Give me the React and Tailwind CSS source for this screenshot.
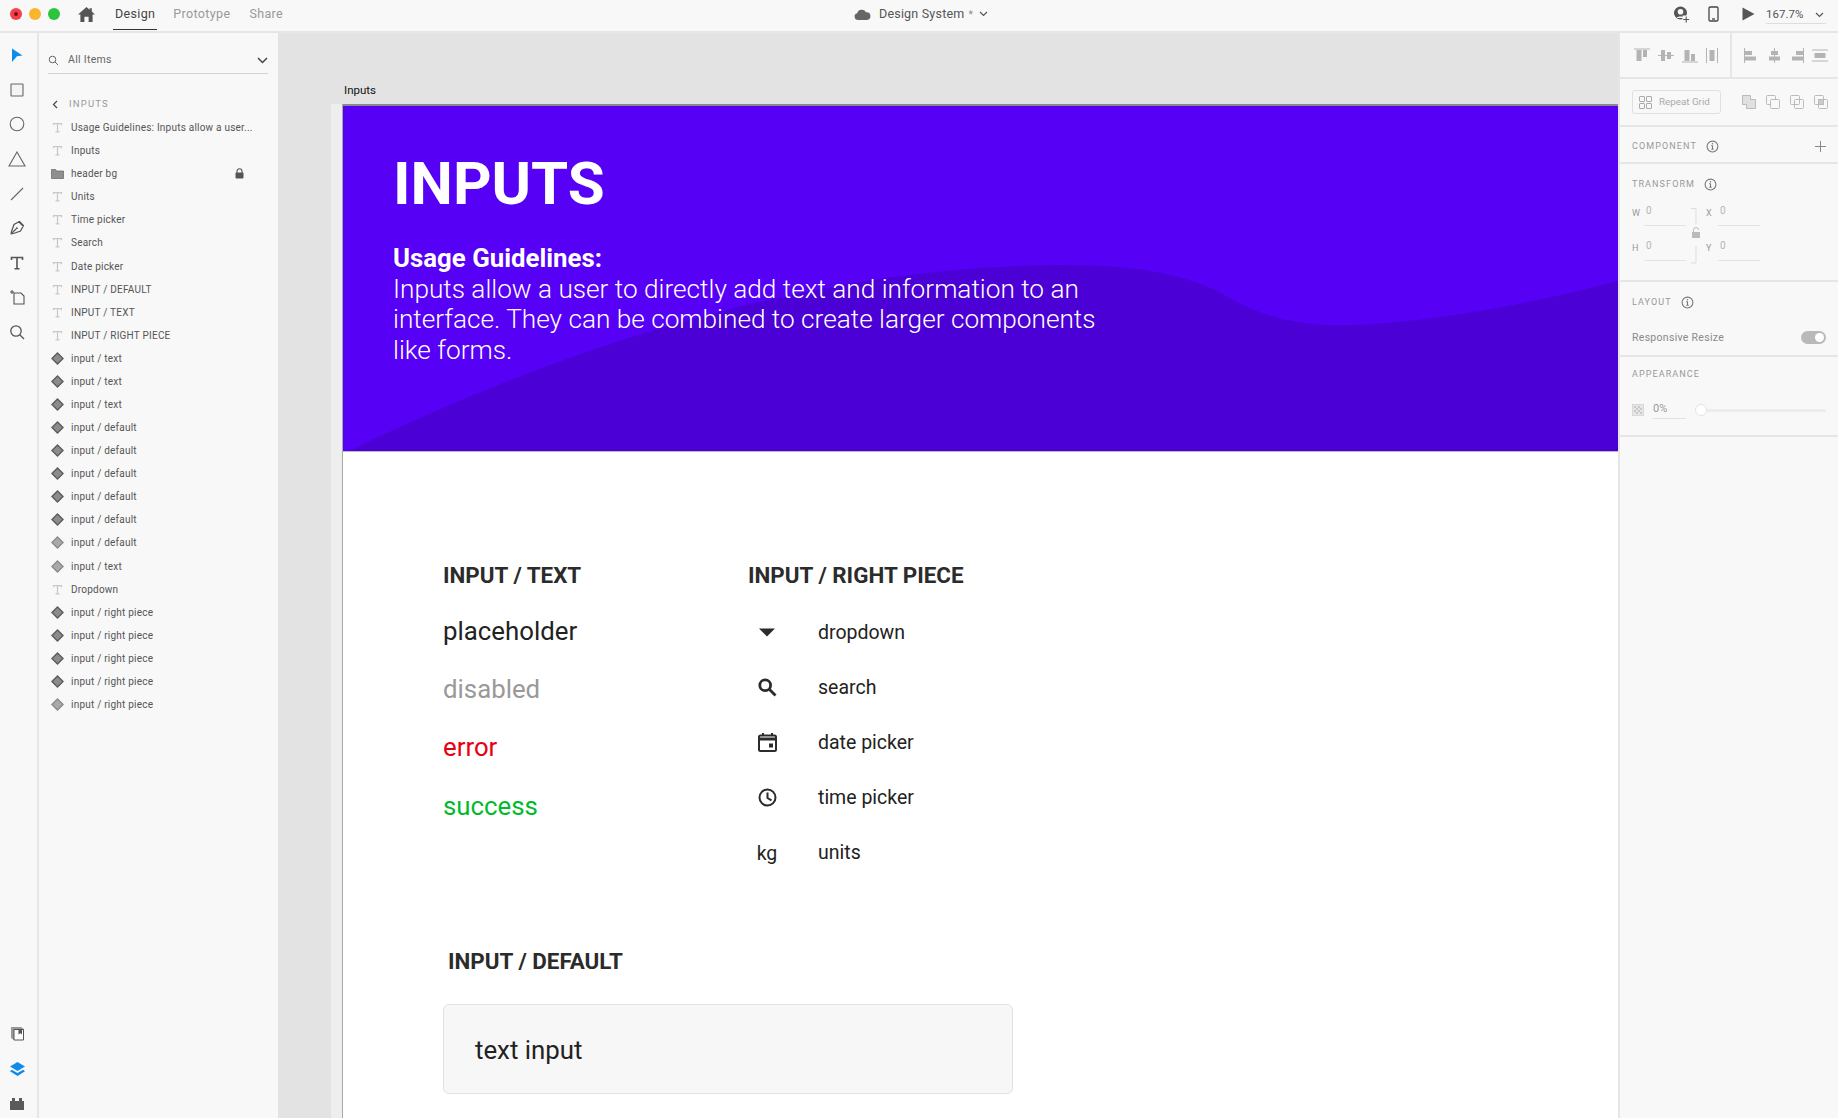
import React from "react";

const TIcon = ({ s = 13, c = "#c4c4c4", w = 1.6 }) => (
  <svg width={s} height={s} viewBox="0 0 14 14" fill="none" stroke={c} strokeWidth={w}>
    <path d="M2 4V2h10v2M7 2v10M4.5 12.5h5" />
  </svg>
);
const Diamond = ({ light }) => (
  <svg width="13" height="13" viewBox="0 0 13 13">
    <path d="M6.5 1 12 6.5 6.5 12 1 6.5Z" fill={light ? "#a9a9a9" : "#8c8c8c"} stroke={light ? "#8a8a8a" : "#5c5c5c"} strokeWidth="1.4" />
  </svg>
);
const Folder = () => (
  <svg width="13" height="13" viewBox="0 0 13 13">
    <path d="M0.5 2.5h4l1.2 1.5h6.8v7.5h-12Z" fill="#8f8f8f" stroke="#6f6f6f" strokeWidth=".8" />
  </svg>
);
const Info = () => (
  <svg width="13" height="13" viewBox="0 0 12 12" fill="none" stroke="#777" strokeWidth="1">
    <circle cx="6" cy="6" r="5" />
    <path d="M6 5.2v3.2M4.9 8.5h2.2M4.9 5.2H6" />
    <circle cx="6" cy="3.4" r=".7" fill="#777" stroke="none" />
  </svg>
);

const layers = [
  ["t", "Usage Guidelines: Inputs allow a user..."], ["t", "Inputs"], ["f", "header bg"], ["t", "Units"], ["t", "Time picker"],
  ["t", "Search"], ["t", "Date picker"], ["t", "INPUT / DEFAULT"], ["t", "INPUT / TEXT"], ["t", "INPUT / RIGHT PIECE"],
  ["d", "input / text"], ["d", "input / text"], ["d", "input / text"],
  ["d", "input / default"], ["d", "input / default"], ["d", "input / default"], ["d", "input / default"], ["d", "input / default"],
  ["l", "input / default"], ["l", "input / text"], ["t", "Dropdown"],
  ["d", "input / right piece"], ["d", "input / right piece"], ["d", "input / right piece"], ["d", "input / right piece"], ["l", "input / right piece"],
];

const railTop = [
  <svg key="a" width="14" height="16" viewBox="0 0 14 16"><path d="M2 1.5 12.5 8.6 7 9.2 2 15Z" fill="#0f8ce9" /></svg>,
  <svg key="b" width="14" height="14" viewBox="0 0 14 14" fill="#f4f4f4" stroke="#666" strokeWidth="1.1"><rect x="1" y="1" width="12" height="12" rx=".5" /></svg>,
  <svg key="c" width="16" height="16" viewBox="0 0 16 16" fill="none" stroke="#666" strokeWidth="1.1"><circle cx="8" cy="8" r="6.8" /></svg>,
  <svg key="d" width="18" height="16" viewBox="0 0 18 16" fill="none" stroke="#666" strokeWidth="1.1"><path d="M9 1 17 15H1Z" /></svg>,
  <svg key="e" width="14" height="14" viewBox="0 0 14 14" fill="none" stroke="#666" strokeWidth="1.1"><path d="M1 13 13 1" /></svg>,
  <svg key="f" width="16" height="16" viewBox="0 0 16 16" fill="none" stroke="#555" strokeWidth="1.2"><path d="M10.5 1.5 14.5 5.5 11.5 11 4.5 13.5 2.2 13.8 2.5 11.5 5 4.5ZM2.4 13.6 7 9M9.5 1.5l5 5" /><circle cx="7.8" cy="8.2" r="1" fill="#555" stroke="none" /></svg>,
  <svg key="g" width="14" height="14" viewBox="0 0 14 14" fill="none" stroke="#555" strokeWidth="1.6"><path d="M1.5 4V1.5h11V4M7 1.5v11M4.5 12.8h5" /></svg>,
  <svg key="h" width="17" height="16" viewBox="0 0 17 16" fill="none" stroke="#555" strokeWidth="1.1"><path d="M5 4h7l3 3v8H5ZM1 3h4M3 1v4" /></svg>,
  <svg key="i" width="16" height="16" viewBox="0 0 16 16" fill="none" stroke="#555" strokeWidth="1.3"><circle cx="7" cy="7" r="5.2" /><path d="m11 11 4 4" /></svg>,
];

const Align = ({ d }) => (
  <svg width="17" height="17" viewBox="0 0 17 17" fill="#b4b4b4">{d}</svg>
);

const Tabs = () => (
  <div className="flex items-center h-full ml-[18px] text-[12.5px] tracking-[0.35px]">
    <div className="relative h-full flex items-center px-[2px] text-[#444]">
      Design
      <div className="absolute left-0 right-0 -bottom-[2px] h-[1.5px] bg-[#333]" />
    </div>
    <div className="ml-[16px] text-[#999]">Prototype</div>
    <div className="ml-[19px] text-[#999]">Share</div>
  </div>
);

const TopBar = () => (
  <div className="relative h-[33px] shrink-0 flex items-center justify-between bg-[#f8f8f8] border-b-2 border-[#e6e6e6] pl-[10px] pr-[12px] pb-[3px]">
    <div className="flex items-center h-full">
      <div className="flex items-center gap-[7px]">
        <div className="w-[12px] h-[12px] rounded-full bg-[#f2404a] flex items-center justify-center">
          <div className="w-[4px] h-[4px] rounded-full bg-[#7a1010]" />
        </div>
        <div className="w-[12px] h-[12px] rounded-full bg-[#f9b52c]" />
        <div className="w-[12px] h-[12px] rounded-full bg-[#2bc43c]" />
      </div>
      <svg className="ml-[18px]" width="17" height="15" viewBox="0 0 17 15" fill="#555"><path d="M8.5 0 0 7.5h2.4V15h4V9.8h4.2V15h4V7.5H17L13.8 4.6V1.2h-2.2v1.5Z" /></svg>
      <Tabs />
    </div>
    <div className="absolute left-[854px] top-0 h-[28px] flex items-center">
      <svg width="17" height="11" viewBox="0 0 17 11" fill="#666"><path d="M4 11a3.4 3.4 0 0 1-.8-6.7A4.8 4.8 0 0 1 12 3.2 3.9 3.9 0 0 1 13 11Z" /></svg>
      <span className="ml-[8px] text-[12.5px] text-[#555] tracking-[0.2px]">Design System</span>
      <span className="ml-[4px] text-[10px] text-[#888]">*</span>
      <svg className="ml-[6px]" width="9" height="6" viewBox="0 0 9 6" fill="none" stroke="#555" strokeWidth="1.2"><path d="m1 1 3.5 3.5L8 1" /></svg>
    </div>
    <div className="flex items-center h-full">
      <svg width="17" height="17" viewBox="0 0 17 17">
        <circle cx="7.5" cy="7" r="6.5" fill="#555" />
        <circle cx="7.5" cy="5.8" r="2.8" fill="#f8f8f8" />
        <path d="M3.5 12c1-2 7-2 8 0" fill="#f8f8f8" />
        <rect x="9.5" y="9.5" width="7.5" height="7.5" fill="#f8f8f8" />
        <path d="M13.2 10.5v6M10.2 13.5h6" stroke="#555" strokeWidth="1.1" />
      </svg>
      <svg className="ml-[18px]" width="11" height="16" viewBox="0 0 11 16" fill="none" stroke="#444" strokeWidth="1.3"><rect x="1" y="1" width="9" height="14" rx="1.3" /><path d="M4 13h3" /></svg>
      <svg className="ml-[23px]" width="13" height="14" viewBox="0 0 13 14" fill="#555"><path d="M0.5 0.5 12.5 7 0.5 13.5Z" /></svg>
      <div className="ml-[11px] w-[60px] h-[18px] border-b border-[#dddddd] flex items-center justify-between mt-[2px]">
        <span className="text-[11.5px] text-[#555] leading-none">167.7%</span>
        <svg className="mr-[2px]" width="9" height="6" viewBox="0 0 9 6" fill="none" stroke="#555" strokeWidth="1.2"><path d="m1 1 3.5 3.5L8 1" /></svg>
      </div>
    </div>
  </div>
);

const Rail = () => (
  <div className="w-[39px] shrink-0 bg-[#f8f8f8] border-r-2 border-[#e6e6e6] flex flex-col pt-[5px] pr-[3px] -mb-[3px]">
    {railTop.map((icon, i) => (
      <div key={i} className="h-[34.6px] flex items-center justify-center">{icon}</div>
    ))}
    <div className="mt-auto">
      <div className="h-[35px] flex items-center justify-center">
        <svg width="15" height="15" viewBox="0 0 15 15"><path d="M1 1h10l3 2v11H4L1 12Z" fill="#999" /><path d="M4 3.5h9.5V14H4Z" fill="#fff" stroke="#555" strokeWidth="1" /><path d="M8.5 3.5h3.5v5l-1.7-1.2L8.5 8.5Z" fill="#555" /></svg>
      </div>
      <div className="h-[35px] flex items-center justify-center">
        <svg width="15" height="14" viewBox="0 0 15 14" fill="#0f8ce9"><path d="M7.5 0 15 4.5 7.5 9 0 4.5Z" /><path d="M1.8 7.8 7.5 11 13.2 7.8 15 9.3 7.5 14 0 9.3Z" /></svg>
      </div>
      <div className="h-[35px] flex items-center justify-center">
        <svg width="14" height="12" viewBox="0 0 14 12" fill="#5a5a5a"><path d="M0 3h2V0h3v3h4V0h3v3h2v9H0Z" /></svg>
      </div>
    </div>
  </div>
);

const LayersPanel = () => (
  <div className="w-[239px] shrink-0 bg-[#f8f8f8] pl-[9px] pr-[10px]">
    <div className="h-[41px] border-b border-[#d2d2d2] flex items-end pb-[5px]">
      <div className="flex items-center justify-between w-full">
        <div className="flex items-center">
          <svg width="11" height="11" viewBox="0 0 11 11" fill="none" stroke="#666" strokeWidth="1"><circle cx="4.5" cy="4.5" r="3.3" /><path d="m7 7 3 3" /></svg>
          <span className="ml-[9px] text-[10.5px] text-[#666] tracking-[0.3px]">All Items</span>
        </div>
        <svg width="11" height="7" viewBox="0 0 11 7" fill="none" stroke="#444" strokeWidth="1.5"><path d="m1 1 4.5 4.5L10 1" /></svg>
      </div>
    </div>
    <div className="flex items-center h-[14px] mt-[23px] pl-[4px]">
      <svg width="6" height="9" viewBox="0 0 6 9" fill="none" stroke="#444" strokeWidth="1.2"><path d="M5 1 1.5 4.5 5 8" /></svg>
      <span className="ml-[11px] text-[9.5px] tracking-[1.2px] text-[#999]">INPUTS</span>
    </div>
    <div className="mt-[5px]">
      {layers.map(([k, name], i) => (
        <div key={i} className="h-[23.08px] flex items-center relative">
          <div className="w-[23px] flex items-center justify-center pr-[4px]">
            {k === "t" && <TIcon s={11} c="#c8c8c8" />}
            {k === "f" && <Folder />}
            {k === "d" && <Diamond />}
            {k === "l" && <Diamond light />}
          </div>
          <span className="text-[10px] text-[#555] tracking-[0.22px] whitespace-nowrap">{name}</span>
          {k === "f" && (
            <svg className="absolute left-[187px] top-[6px]" width="9" height="11" viewBox="0 0 9 11" fill="#555"><path d="M2 5V3.2a2.5 2.5 0 0 1 5 0V5" fill="none" stroke="#555" strokeWidth="1.1" /><rect x="0.5" y="4.5" width="8" height="6" rx="1" /></svg>
          )}
        </div>
      ))}
    </div>
  </div>
);

const rightRows = [
  {
    k: "dropdown",
    icon: <svg width="18" height="9" viewBox="0 0 18 9" fill="#2b2b2b"><path d="M1 .5h16L9 8.5Z" /></svg>,
  },
  {
    k: "search",
    icon: <svg width="19" height="19" viewBox="0 0 19 19" fill="none" stroke="#2b2b2b" strokeWidth="2.8"><circle cx="7.2" cy="7.2" r="5.4" /><path d="m11.5 11.5 6 6" /></svg>,
  },
  {
    k: "date picker",
    icon: <svg width="19" height="19" viewBox="0 0 19 19" fill="none" stroke="#2b2b2b"><rect x="1" y="2.5" width="17" height="15.5" rx="1.5" strokeWidth="2" /><path d="M1 6h17" strokeWidth="3" /><path d="M5 0v3M14 0v3" strokeWidth="2" /><rect x="11" y="10.5" width="4" height="4" fill="#2b2b2b" stroke="none" /></svg>,
  },
  {
    k: "time picker",
    icon: <svg width="19" height="19" viewBox="0 0 19 19" fill="none" stroke="#2b2b2b" strokeWidth="2"><circle cx="9.5" cy="9.5" r="8" /><path d="M9.5 4.5v5.5l4 2.4" /></svg>,
  },
  { k: "units", icon: <span className="text-[19.5px] text-[#222] leading-none relative top-[1px]">kg</span> },
];

const Artboard = () => (
  <div className="flex-1 min-w-0 bg-[#e3e3e3] flex flex-col overflow-hidden pl-[53px]">
    <div className="h-[14px] mt-[51px] flex items-center pl-[13px] text-[11.5px] text-[#111]">Inputs</div>
    <div className="mt-[6px] flex-1 border-l-[11px] border-[#eeeeee] min-h-0">
      <div className="h-full bg-white border-l border-[#a8a8a8] overflow-hidden">
        <div className="relative h-[348px] bg-[#5600f5] border-t-2 border-[#8a8a8a] border-b border-b-[#bbbbbb] overflow-hidden">
          <svg className="absolute inset-0" width="1275" height="348" viewBox="0 0 1275 348" preserveAspectRatio="none">
            <path d="M0 348C150 275 420 160 720 159C800 159 850 170 885 191C930 218 980 221 1012 219C1100 215 1200 195 1275 175L1275 348Z" fill="#4b00d5" />
          </svg>
          <div className="relative pl-[50px] pt-[43px] text-white">
            <div className="text-[60px] leading-[70px] font-bold">INPUTS</div>
            <div className="mt-[24px] w-[730px] leading-[30.5px]">
              <div className="font-bold text-[25.8px]">Usage Guidelines:</div>
              <div className="font-light text-[26.2px]">
                Inputs allow a user to directly add text and information to an
                interface. They can be combined to create larger components
                like forms.
              </div>
            </div>
          </div>
        </div>

        <div className="pl-[100px] pt-[110px]">
          <div className="flex">
            <div className="w-[305px]">
              <div className="text-[22.4px] leading-[27px] font-bold text-[#2b2b2b]">INPUT / TEXT</div>
              <div className="mt-[13px] flex flex-col text-[25.8px] leading-[58.2px]">
                <div className="text-[#222]">placeholder</div>
                <div className="text-[#999]">disabled</div>
                <div className="text-[#e60012]">error</div>
                <div className="text-[#00ba2c]">success</div>
              </div>
            </div>
            <div>
              <div className="text-[22.4px] leading-[27px] font-bold text-[#2b2b2b]">INPUT / RIGHT PIECE</div>
              <div className="mt-[16px] flex flex-col">
                {rightRows.map((r) => (
                  <div key={r.k} className="h-[55px] flex items-center">
                    <div className="w-[38px] flex justify-center">{r.icon}</div>
                    <div className="ml-[32px] text-[19.5px] text-[#222]">{r.k}</div>
                  </div>
                ))}
              </div>
            </div>
          </div>
          <div className="mt-[68px] pl-[5px] text-[22.4px] leading-[27px] font-bold text-[#2b2b2b]">INPUT / DEFAULT</div>
          <div className="mt-[29px] w-[570px] h-[90px] rounded-[6px] border border-[#e2e2e2] bg-[#f7f7f7] flex items-center pl-[31px] pt-[2px] text-[25.8px] text-[#222]">
            text input
          </div>
        </div>
      </div>
    </div>
  </div>
);

const Section = ({ h, children, className = "" }) => (
  <div className={`border-b-2 border-[#e6e6e6] shrink-0 px-[12px] ${className}`} style={{ height: h }}>{children}</div>
);

const Label = ({ children }) => (
  <span className="text-[9px] tracking-[1.1px] text-[#999] leading-none">{children}</span>
);

const Field = ({ l, className = "" }) => (
  <div className={`flex items-start gap-[1px] ${className}`}>
    <span className="w-[11px] text-[9px] text-[#999] tracking-[0.5px] leading-none mt-[5px]">{l}</span>
    <div className="w-[42px] h-[22px] border-b border-[#e3e3e3] text-[10px] text-[#b5b5b5] pl-[2px] leading-none pt-[2px]">0</div>
  </div>
);

const PropsPanel = () => (
  <div className="w-[220px] shrink-0 bg-[#f8f8f8] border-l-2 border-[#e6e6e6] flex flex-col">
    <div className="h-[46px] shrink-0 border-b-2 border-[#e6e6e6] flex">
      <div className="w-[112px] border-r-2 border-[#e6e6e6] flex items-center pl-[14px] gap-[7px]">
        <Align d={<><path d="M0 1.5h16v1H0Z" /><rect x="2.5" y="3" width="5" height="11" /><rect x="9" y="3" width="4" height="7" /></>} />
        <Align d={<><path d="M0 8h16v1H0Z" /><rect x="3" y="3" width="4" height="11" /><rect x="9" y="5" width="4" height="7" /></>} />
        <Align d={<><path d="M0 14.5h16v1H0Z" /><rect x="2.5" y="3" width="5" height="11" /><rect x="9" y="7" width="4" height="7" /></>} />
        <svg width="12" height="17" viewBox="0 0 12 17" fill="#b4b4b4"><path d="M0 1h1v15H0ZM11 1h1v15h-1Z" /><rect x="3.5" y="3" width="5" height="11" /></svg>
      </div>
      <div className="flex items-center pl-[11px] gap-[6px]">
        <Align d={<><path d="M1 1h1v15H1Z" /><rect x="2" y="4" width="7" height="4" /><rect x="2" y="9.5" width="11" height="4" /></>} />
        <Align d={<><path d="M8 1h1v15H8Z" /><rect x="5" y="4" width="7" height="4" /><rect x="3" y="9.5" width="11" height="4" /></>} />
        <Align d={<><path d="M14 1h1v15h-1Z" /><rect x="7" y="4" width="7" height="4" /><rect x="3" y="9.5" width="11" height="4" /></>} />
        <Align d={<><path d="M0 2.5h16v1H0ZM0 13.5h16v1H0Z" /><rect x="2.5" y="6" width="11" height="5" /></>} />
      </div>
    </div>
    <Section h={48} className="flex items-center justify-between pr-[10px]">
      <div className="w-[89px] h-[24px] rounded-[3px] border border-[#e0e0e0] flex items-center pl-[6px]">
        <svg width="13" height="13" viewBox="0 0 13 13" fill="none" stroke="#aaa"><rect x=".5" y=".5" width="5" height="5" rx=".5" /><rect x="7.5" y=".5" width="5" height="5" rx=".5" /><rect x=".5" y="7.5" width="5" height="5" rx=".5" /><rect x="7.5" y="7.5" width="5" height="5" rx=".5" /></svg>
        <span className="ml-[7px] text-[9.8px] text-[#aaa] whitespace-nowrap">Repeat Grid</span>
      </div>
      <div className="flex items-center gap-[10px]">
        <svg width="14" height="14" viewBox="0 0 14 14" stroke="#bbb" fill="#e0e0e0"><path d="M.5.5h8v4h5v9h-9v-4h-4Z" /></svg>
        <svg width="14" height="14" viewBox="0 0 14 14" stroke="#bbb" fill="none"><rect x=".5" y=".5" width="9" height="9" rx="1" /><rect x="4.5" y="4.5" width="9" height="9" rx="1" fill="#f8f8f8" /></svg>
        <svg width="14" height="14" viewBox="0 0 14 14" stroke="#bbb" fill="none"><rect x=".5" y=".5" width="9" height="9" rx="1" /><rect x="4.5" y="4.5" width="9" height="9" rx="1" /></svg>
        <svg width="14" height="14" viewBox="0 0 14 14" stroke="#bbb" fill="none"><rect x=".5" y=".5" width="9" height="9" rx="1" /><rect x="4.5" y="4.5" width="9" height="9" rx="1" /><rect x="4.5" y="4.5" width="5" height="5" fill="#ccc" /></svg>
      </div>
    </Section>
    <Section h={37} className="flex items-center justify-between pr-[12px] pt-[3px]">
      <div className="flex items-center gap-[9px]"><Label>COMPONENT</Label><Info /></div>
      <svg width="11" height="11" viewBox="0 0 11 11" stroke="#888" strokeWidth="1"><path d="M5.5 0v11M0 5.5h11" /></svg>
    </Section>
    <Section h={118} className="pt-[14px]">
      <div className="flex items-center gap-[9px] h-[12px]"><Label>TRANSFORM</Label><Info /></div>
      <div className="mt-[14px] flex">
        <div>
          <Field l="W" />
          <Field l="H" className="mt-[13px]" />
        </div>
        <div className="w-[20px] flex justify-center">
          <svg width="12" height="56" viewBox="0 0 12 56" fill="none" stroke="#dddddd" className="-ml-[2px] mt-[4px]">
            <path d="M2 .5h5v16M7 38v17H2" />
            <rect x="3" y="24" width="8" height="6" fill="#bbb" stroke="none" />
            <path d="M4.5 24v-2a2.5 2.5 0 0 1 5 0" stroke="#bbb" />
          </svg>
        </div>
        <div>
          <Field l="X" />
          <Field l="Y" className="mt-[13px]" />
        </div>
      </div>
    </Section>
    <Section h={75} className="pt-[14px]">
      <div className="flex items-center gap-[9px] h-[12px]"><Label>LAYOUT</Label><Info /></div>
      <div className="mt-[22px] flex items-center justify-between">
        <span className="text-[10.5px] text-[#8a8a8a] tracking-[0.3px]">Responsive Resize</span>
        <div className="w-[25px] h-[13px] rounded-full bg-[#b9b9b9] flex items-center justify-end pr-[2px]">
          <div className="w-[9px] h-[9px] rounded-full bg-white" />
        </div>
      </div>
    </Section>
    <Section h={80} className="pt-[11px]">
      <div className="h-[12px] flex items-center"><Label>APPEARANCE</Label></div>
      <div className="mt-[21px] flex items-center">
        <svg width="12" height="12" viewBox="0 0 12 12"><rect width="12" height="12" fill="#e6e6e6" stroke="#ccc" /><path d="M2 2h2v2H2ZM6 2h2v2H6ZM4 4h2v2H4ZM8 4h2v2H8ZM2 6h2v2H2ZM6 6h2v2H6ZM4 8h2v2H4ZM8 8h2v2H8Z" fill="#c9c9c9" /></svg>
        <div className="ml-[8px] w-[34px] h-[18px] border-b border-[#e3e3e3] text-[11px] text-[#999] pl-[1px] flex items-center">0%</div>
        <div className="relative ml-[9px] flex-1 h-[3px] rounded bg-[#ececec] flex items-center">
          <div className="w-[12px] h-[12px] rounded-full bg-white border border-[#e4e4e4]" />
        </div>
      </div>
    </Section>
  </div>
);

export default function App() {
  return (
    <div className="w-[1838px] h-[1118px] overflow-hidden flex flex-col font-['Roboto',sans-serif] bg-[#f8f8f8]">
      <TopBar />
      <div className="flex flex-1 min-h-0">
        <Rail />
        <LayersPanel />
        <Artboard />
        <PropsPanel />
      </div>
    </div>
  );
}
